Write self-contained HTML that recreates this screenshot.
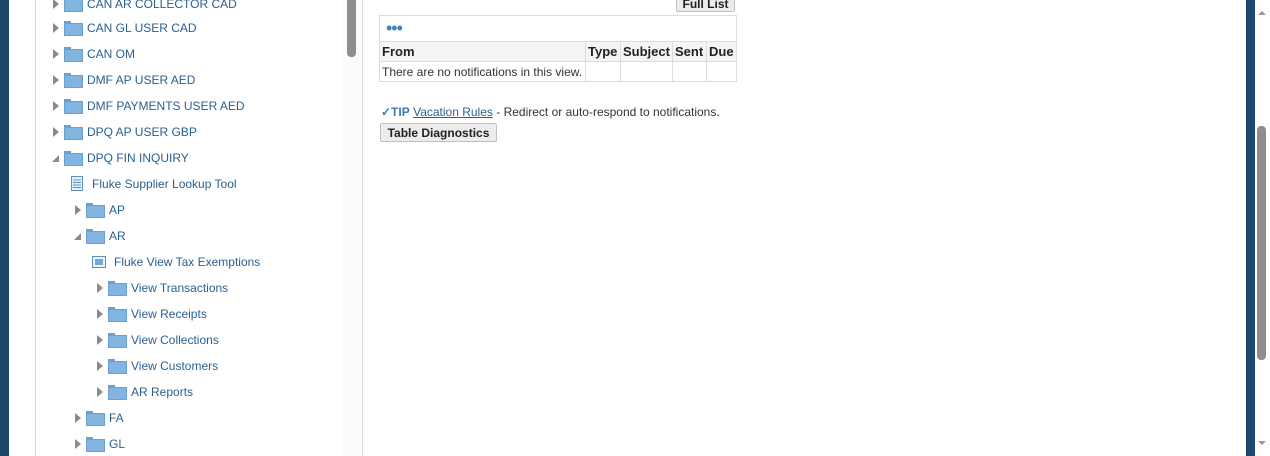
<!DOCTYPE html>
<html><head><meta charset="utf-8"><style>
*{margin:0;padding:0;box-sizing:border-box}
body{width:1270px;height:456px;overflow:hidden;background:#fff;font-family:"Liberation Sans",Arial,sans-serif;position:relative}
.abs{position:absolute}
.row{position:absolute;height:18px;font-size:12px;color:#2b5f91;white-space:nowrap;line-height:18px}
.arr{position:absolute;width:0;height:0;border-top:5px solid transparent;border-bottom:5px solid transparent;border-left:6px solid #8a8a8a;top:4px}
.arrd{position:absolute;width:0;height:0;border-left:7px solid transparent;border-bottom:7px solid #8a8a8a;top:6px}
.fold{position:absolute;top:2px;width:17px;height:13px}
.fold:before{content:"";position:absolute;left:0;top:0;width:7px;height:3px;background:#6a9fd0}
.fold:after{content:"";position:absolute;left:0;top:2px;width:17px;height:11px;background:#82b4e2;border:1px solid #6a9fd0}
table{border-collapse:collapse;font-size:12px;table-layout:fixed}
td,th{border:1px solid #dcdcdc;padding:0 2px;height:20px;white-space:nowrap;overflow:hidden}
th{background:#f5f5f5;text-align:left;font-size:13px;color:#222}
.btn{position:absolute;background:#ececec;border:1px solid #c0c0c0;border-radius:2px;font-weight:bold;font-size:12px;color:#222;text-align:center}
</style></head><body>
<div class="abs" style="left:0;top:0;width:9px;height:456px;background:#1d476b"></div>
<div class="abs" style="left:35px;top:0;width:1px;height:456px;background:#d8d8d8"></div>
<div class="abs" style="left:343px;top:0;width:19px;height:456px;background:#fbfbfb"></div>
<div class="abs" style="left:347px;top:-5px;width:9px;height:62px;background:#8e8e8e;border-radius:4px"></div>
<div class="abs" style="left:362px;top:0;width:1px;height:456px;background:#dcdcdc"></div>
<div class="abs" style="left:1246px;top:0;width:9px;height:456px;background:#1d476b"></div>
<div class="abs" style="left:1257px;top:126px;width:9px;height:234px;background:#8e8e8e;border-radius:4px"></div>
<div class="abs" style="left:1258px;top:11px;border-left:4px solid transparent;border-right:4px solid transparent;border-bottom:4px solid #999"></div>
<div class="abs" style="left:1258px;top:441px;border-left:4px solid transparent;border-right:4px solid transparent;border-top:4px solid #999"></div>

<div class="row" style="left:53px;top:-5px"><i class="arr" style="left:0"></i><i class="fold" style="left:11px"></i><span style="position:absolute;left:34px">CAN AR COLLECTOR CAD</span></div>
<div class="row" style="left:53px;top:19px"><i class="arr" style="left:0"></i><i class="fold" style="left:11px"></i><span style="position:absolute;left:34px">CAN GL USER CAD</span></div>
<div class="row" style="left:53px;top:45px"><i class="arr" style="left:0"></i><i class="fold" style="left:11px"></i><span style="position:absolute;left:34px">CAN OM</span></div>
<div class="row" style="left:53px;top:71px"><i class="arr" style="left:0"></i><i class="fold" style="left:11px"></i><span style="position:absolute;left:34px">DMF AP USER AED</span></div>
<div class="row" style="left:53px;top:97px"><i class="arr" style="left:0"></i><i class="fold" style="left:11px"></i><span style="position:absolute;left:34px">DMF PAYMENTS USER AED</span></div>
<div class="row" style="left:53px;top:123px"><i class="arr" style="left:0"></i><i class="fold" style="left:11px"></i><span style="position:absolute;left:34px">DPQ AP USER GBP</span></div>
<div class="row" style="left:53px;top:149px"><i class="arrd" style="left:-1px"></i><i class="fold" style="left:11px"></i><span style="position:absolute;left:34px">DPQ FIN INQUIRY</span></div>
<div class="row" style="left:70px;top:175px"><svg style="position:absolute;left:1px;top:1px" width="12" height="15"><rect x="0.5" y="0.5" width="11" height="14" fill="#e8f1fb" stroke="#5b8fc7"/><path d="M2 4h8M2 6.5h8M2 9h8M2 11.5h8" stroke="#5b8fc7"/></svg><span style="position:absolute;left:22px">Fluke Supplier Lookup Tool</span></div>
<div class="row" style="left:75px;top:201px"><i class="arr" style="left:0"></i><i class="fold" style="left:11px"></i><span style="position:absolute;left:34px">AP</span></div>
<div class="row" style="left:75px;top:227px"><i class="arrd" style="left:-1px"></i><i class="fold" style="left:11px"></i><span style="position:absolute;left:34px">AR</span></div>
<div class="row" style="left:92px;top:253px"><svg style="position:absolute;left:0;top:3px" width="14" height="12"><rect x="0.5" y="0.5" width="13" height="11" fill="#eef4fb" stroke="#5b8fc7"/><rect x="3" y="3" width="8" height="6" fill="#7aa9d8"/></svg><span style="position:absolute;left:22px">Fluke View Tax Exemptions</span></div>
<div class="row" style="left:97px;top:279px"><i class="arr" style="left:0"></i><i class="fold" style="left:11px"></i><span style="position:absolute;left:34px">View Transactions</span></div>
<div class="row" style="left:97px;top:305px"><i class="arr" style="left:0"></i><i class="fold" style="left:11px"></i><span style="position:absolute;left:34px">View Receipts</span></div>
<div class="row" style="left:97px;top:331px"><i class="arr" style="left:0"></i><i class="fold" style="left:11px"></i><span style="position:absolute;left:34px">View Collections</span></div>
<div class="row" style="left:97px;top:357px"><i class="arr" style="left:0"></i><i class="fold" style="left:11px"></i><span style="position:absolute;left:34px">View Customers</span></div>
<div class="row" style="left:97px;top:383px"><i class="arr" style="left:0"></i><i class="fold" style="left:11px"></i><span style="position:absolute;left:34px">AR Reports</span></div>
<div class="row" style="left:75px;top:409px"><i class="arr" style="left:0"></i><i class="fold" style="left:11px"></i><span style="position:absolute;left:34px">FA</span></div>
<div class="row" style="left:75px;top:435px"><i class="arr" style="left:0"></i><i class="fold" style="left:11px"></i><span style="position:absolute;left:34px">GL</span></div>

<div class="btn" style="left:676px;top:-6px;width:59px;height:18px;line-height:18px">Full List</div>
<div class="abs" style="left:379px;top:15px;width:358px;height:67px;border:1px solid #dcdcdc">
<div style="height:25px;line-height:24px;padding-left:6px;color:#4a7fb5;font-size:18px;letter-spacing:-1px">•••</div>
<table style="width:357px;margin-left:-1px">
<colgroup><col style="width:206px"><col style="width:35px"><col style="width:52px"><col style="width:34px"><col style="width:30px"></colgroup>
<tr><th>From</th><th>Type</th><th>Subject</th><th>Sent</th><th>Due</th></tr>
<tr><td style="color:#333;height:19px">There are no notifications in this view.</td><td></td><td></td><td></td><td></td></tr>
</table></div>
<div class="abs" style="left:381px;top:105px;font-size:12px;color:#333;white-space:nowrap"><span style="color:#3c78b5;font-weight:bold">✓TIP</span> <span style="color:#2b5f91;text-decoration:underline">Vacation Rules</span> - Redirect or auto-respond to notifications.</div>
<div class="btn" style="left:380px;top:123px;width:117px;height:19px;line-height:18px">Table Diagnostics</div>
</body></html>
